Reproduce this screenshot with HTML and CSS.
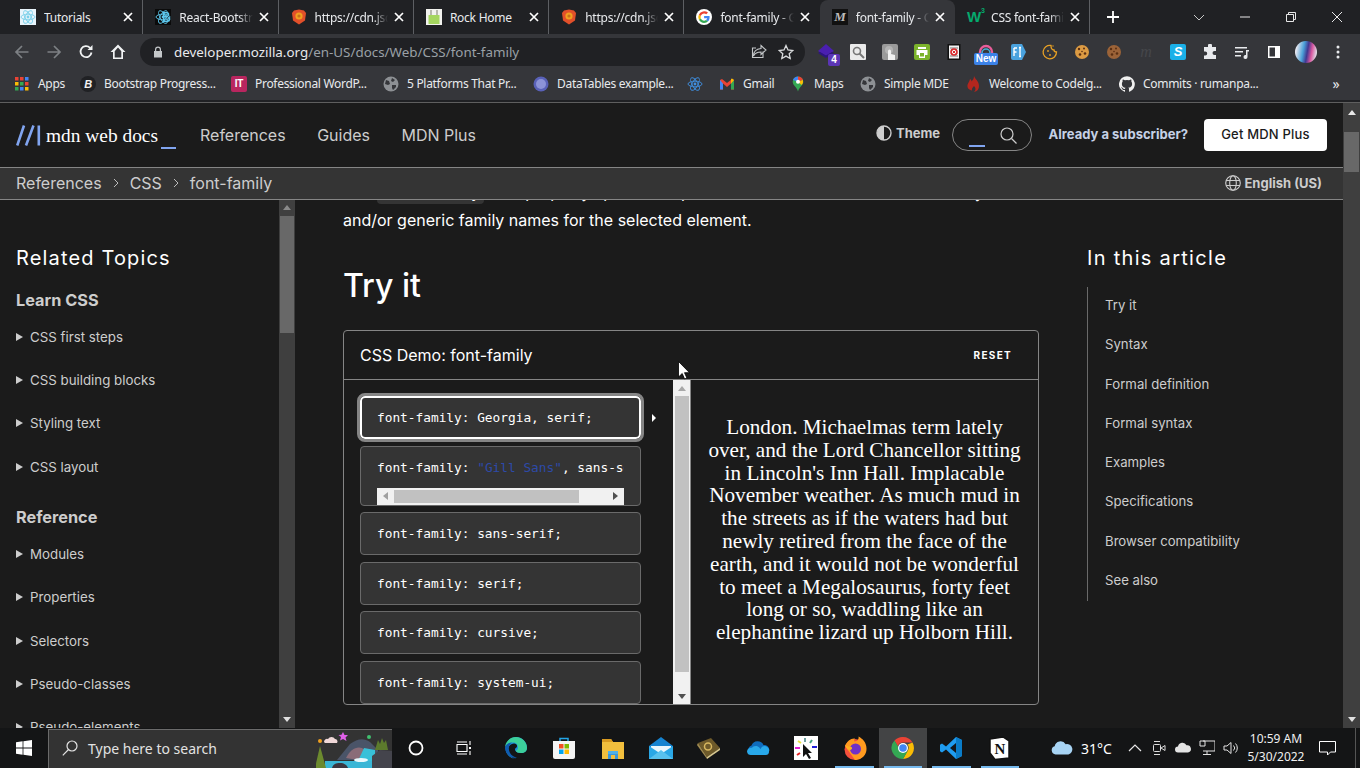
FILE: index.html
```html
<!DOCTYPE html>
<html lang="en">
<head>
<meta charset="utf-8">
<title>font-family - CSS | MDN</title>
<link rel="stylesheet" href="styles.css">
</head>
<body>
<svg class="sprite" aria-hidden="true">
  <symbol id="x" viewBox="0 0 10 10"><path d="M1 1l8 8M9 1L1 9" stroke="currentColor" stroke-width="1.7" fill="none"/></symbol>
  <symbol id="lion" viewBox="0 0 16 16"><path d="M3 1.500L8 .5l5 1 2 2.500-1 7.500L8 15.500 2 11.500 1 4z" fill="#e2502a"/><circle cx="8" cy="7" r="3.600" fill="#f0a020"/><circle cx="8" cy="7" r="1.600" fill="#c9701a"/></symbol>
  <symbol id="globe" viewBox="0 0 16 16"><circle cx="8" cy="8" r="7.500" fill="#8d9094"/><path d="M3 4l3 1 1 3-2 1-3-1zM9 2l3 2-2 2-2-1zM9 9l4 0 0 2-3 3-1-2z" fill="#35363a"/></symbol>
  <symbol id="caret" viewBox="0 0 8 9"><path d="M0 0l8 4.500L0 9z" fill="currentColor"/></symbol>
  <symbol id="atom" viewBox="0 0 16 16"><g fill="none" stroke="currentColor" stroke-width=".9"><ellipse cx="8" cy="8" rx="7" ry="2.800"/><ellipse cx="8" cy="8" rx="7" ry="2.800" transform="rotate(60 8 8)"/><ellipse cx="8" cy="8" rx="7" ry="2.800" transform="rotate(120 8 8)"/></g><circle cx="8" cy="8" r="1.400" fill="currentColor"/></symbol>
  <symbol id="cookie" viewBox="0 0 16 16"><circle cx="8" cy="8" r="7" fill="currentColor"/><g fill="#5a2f12"><circle cx="5" cy="5" r="1.200"/><circle cx="10" cy="4.500" r="1"/><circle cx="11" cy="9.500" r="1.300"/><circle cx="6" cy="10.500" r="1.300"/><circle cx="8" cy="7.500" r=".8"/></g></symbol>
</svg>

<div class="tabstrip">
  <div class="tab">
    <svg class="fav fav-react" viewBox="0 0 16 16"><use href="#atom"/></svg>
    <span class="tab-title">Tutorials</span>
    <svg class="tab-x" viewBox="0 0 10 10"><use href="#x"/></svg>
  </div>
  <div class="tab">
    <svg class="fav fav-rb" viewBox="0 0 16 16"><use href="#atom"/><path d="M8 3h4a2.300 2.300 0 0 1 1 4.400A2.500 2.500 0 0 1 12 13H8zM9.600 4.500v2.300h2.200a1.100 1.100 0 0 0 0-2.300zM9.600 8.200v3.300h2.400a1.600 1.600 0 0 0 0-3.300z" fill="#5dc8ee"/></svg>
    <span class="tab-title">React-Bootstrap</span>
    <svg class="tab-x" viewBox="0 0 10 10"><use href="#x"/></svg>
  </div>
  <div class="tab">
    <svg class="fav" viewBox="0 0 16 16"><use href="#lion"/></svg>
    <span class="tab-title">https://cdn.jsdelivr</span>
    <svg class="tab-x" viewBox="0 0 10 10"><use href="#x"/></svg>
  </div>
  <div class="tab">
    <svg class="fav" viewBox="0 0 16 16"><rect width="16" height="16" fill="#f2f2ee"/><rect x="2.500" y="6" width="11" height="9" fill="#a5d65f"/><path d="M5 1v5M11 1v5" stroke="#7d7d6d"/></svg>
    <span class="tab-title">Rock Home</span>
    <svg class="tab-x" viewBox="0 0 10 10"><use href="#x"/></svg>
  </div>
  <div class="tab">
    <svg class="fav" viewBox="0 0 16 16"><use href="#lion"/></svg>
    <span class="tab-title">https://cdn.jsdelivr</span>
    <svg class="tab-x" viewBox="0 0 10 10"><use href="#x"/></svg>
  </div>
  <div class="tab">
    <svg class="fav" viewBox="0 0 16 16"><circle cx="8" cy="8" r="8" fill="#fff"/><path d="M13.600 8.200c0-.5 0-.9-.1-1.300H8.100v2.400h3.100c-.2.800-.6 1.400-1.200 1.800l1.900 1.500c1.100-1 1.700-2.500 1.700-4.400z" fill="#4285f4"/><path d="M8.100 14c1.600 0 2.900-.5 3.800-1.400L10 11.100c-.5.400-1.200.6-1.900.6-1.500 0-2.800-1-3.300-2.400L2.900 10.800C3.900 12.800 5.900 14 8.100 14z" fill="#34a853"/><path d="M4.800 9.300a3.600 3.600 0 0 1 0-2.300L2.900 5.500a6 6 0 0 0 0 5.300z" fill="#fbbc05"/><path d="M8.100 4.400c.9 0 1.600.3 2.200.9l1.700-1.700A6 6 0 0 0 2.900 5.500L4.800 7c.5-1.500 1.800-2.600 3.300-2.600z" fill="#ea4335"/></svg>
    <span class="tab-title">font-family - Google</span>
    <svg class="tab-x" viewBox="0 0 10 10"><use href="#x"/></svg>
  </div>
  <div class="tab tab-active">
    <span class="fav fav-m">M</span>
    <span class="tab-title">font-family - CSS</span>
    <svg class="tab-x" viewBox="0 0 10 10"><use href="#x"/></svg>
  </div>
  <div class="tab tab-last">
    <span class="fav fav-w">W<sup class="fav-w3">3</sup></span>
    <span class="tab-title">CSS font-family</span>
    <svg class="tab-x" viewBox="0 0 10 10"><use href="#x"/></svg>
  </div>
  <svg class="tab-plus" viewBox="0 0 12 12"><path d="M6 0v12M0 6h12" stroke="#fff" stroke-width="1.800"/></svg>
  <div class="winctl">
    <svg class="win-ic" viewBox="0 0 12 12"><path d="M1 4l5 5 5-5" stroke="#c8c8c8" fill="none"/></svg>
    <svg class="win-ic" viewBox="0 0 12 12"><path d="M1 6h10" stroke="#e8e8e8"/></svg>
    <svg class="win-ic" viewBox="0 0 12 12"><path d="M1.500 3.500h7v7h-7zM3.500 3.500v-2h7v7h-2" stroke="#e8e8e8" fill="none"/></svg>
    <svg class="win-ic" viewBox="0 0 12 12"><path d="M1 1l10 10M11 1L1 11" stroke="#e8e8e8" fill="none"/></svg>
  </div>
</div>

<div class="toolbar">
  <div class="nav-btns">
    <svg class="tb-ic tb-dim" viewBox="0 0 16 16"><path d="M14.500 8H2M8 2L2 8l6 6" fill="none" stroke="currentColor" stroke-width="1.700"/></svg>
    <svg class="tb-ic tb-dim" viewBox="0 0 16 16"><path d="M1.500 8H14M8 2l6 6-6 6" fill="none" stroke="currentColor" stroke-width="1.700"/></svg>
    <svg class="tb-ic" viewBox="0 0 16 16"><path d="M13.500 8.500A5.500 5.500 0 1 1 12 3.800" fill="none" stroke="currentColor" stroke-width="1.800"/><path d="M14.500 1v5h-5z" fill="currentColor"/></svg>
    <svg class="tb-ic" viewBox="0 0 16 16"><path d="M8 .5L.5 8H3v7h10V8h2.500zM4.700 13.400V7.200L8 3.500l3.300 3.700v6.200z" fill="currentColor" fill-rule="evenodd"/></svg>
  </div>
  <div class="omnibox">
    <svg class="lock" viewBox="0 0 10 12"><path d="M2 5V3.500a3 3 0 0 1 6 0V5h1v6.500H1V5zM3.200 5h3.600V3.500a1.800 1.800 0 0 0-3.600 0z" fill="#c4c7c9" fill-rule="evenodd"/></svg>
    <span class="url"><span class="url-host">developer.mozilla.org</span>/en-US/docs/Web/CSS/font-family</span>
    <svg class="omni-ic" viewBox="0 0 16 16"><path d="M10 1.500l5 4.500-5 4.500V8C6.500 8 4 9 2.500 12c0-4 2.500-7 7.500-7.500zM12 7.500v6H1.500V4H5" fill="none" stroke="#c4c7c9" stroke-width="1.100"/></svg>
    <svg class="omni-ic" viewBox="0 0 16 16"><path d="M8 1.500l2 4.500 4.800.5-3.600 3.200 1 4.800L8 12.100l-4.200 2.400 1-4.800L1.200 6.500 6 6z" fill="none" stroke="#d8dadc" stroke-width="1.300"/></svg>
  </div>
  <div class="exts">
    <div class="ext"><svg class="ext-16" viewBox="0 0 16 16"><path d="M8 0l8 7-8 5-8-5z" fill="#4a1fb0"/><path d="M0 9l8 5 8-5-2-1-6 3.500L2 8z" fill="#2d1480"/></svg><span class="ext-badge ext-four">4</span></div>
    <div class="ext"><svg class="ext-16" viewBox="0 0 16 16"><rect width="16" height="16" rx="1" fill="#ebebeb"/><circle cx="7" cy="7" r="3.500" fill="none" stroke="#777" stroke-width="1.600"/><path d="M9.500 9.500L14 14" stroke="#777" stroke-width="2"/></svg></div>
    <div class="ext"><svg class="ext-16" viewBox="0 0 16 16"><rect width="16" height="16" rx="2" fill="#9a9a9a"/><circle cx="7" cy="6" r="4" fill="#b4b4b4"/><path d="M6 16V7a1.500 1.500 0 0 1 3 0v3l4 1v5z" fill="#f2f2f2"/></svg></div>
    <div class="ext"><svg class="ext-16" viewBox="0 0 16 16"><rect width="16" height="16" rx="2" fill="#7cb32c"/><path d="M4 3h8v2H4zM2.500 6h11v5H11v3H5v-3H2.500z" fill="#fff"/><rect x="6" y="9" width="4" height="3.500" fill="#7cb32c"/></svg></div>
    <div class="ext"><svg class="ext-16" viewBox="0 0 16 16"><rect x="1.500" width="13" height="16" fill="#111"/><rect x="3" y="1.500" width="10" height="13" fill="#f4f4f4"/><path d="M4 4h8M4 12h8" stroke="#777"/><circle cx="8" cy="8" r="3" fill="none" stroke="#d8282a" stroke-width="1.600"/><path d="M6.500 6.500l3 3M9.500 6.500l-3 3" stroke="#d8282a"/></svg></div>
    <div class="ext"><svg class="ext-16" viewBox="0 0 16 16"><path d="M2 13V8a6 6 0 0 1 12 0v5z" fill="none" stroke="#e85d9a" stroke-width="2.400"/><path d="M4 9a4 4 0 0 1 8 0" fill="none" stroke="#46b0d8" stroke-width="1.500"/><circle cx="8" cy="10" r="2" fill="#444"/></svg><span class="ext-badge ext-new">New</span></div>
    <div class="ext"><svg class="ext-16" viewBox="0 0 16 16"><path d="M1 2a2 2 0 0 1 2-2h9l4 8-4 8H3a2 2 0 0 1-2-2z" fill="#4aa3df"/><path d="M4 4h3M4 4v8M4 8h2.500M9 3.500h2M10 3.500v9M9 12.500h2" stroke="#fff" stroke-width="1.400" fill="none"/></svg></div>
    <div class="ext"><svg class="ext-16" viewBox="0 0 16 16"><path d="M9 1.500a6.700 6.700 0 1 0 5.500 6.500c-1.500 0-2.500-1-2.500-2-1.500 0-3-1.500-3-4.500z" fill="none" stroke="#e8a125" stroke-width="1.300"/><circle cx="6" cy="7" r=".9" fill="#e8a125"/><circle cx="8" cy="11" r=".9" fill="#e8a125"/><circle cx="11" cy="2" r=".7" fill="#e8a125"/></svg></div>
    <div class="ext"><svg class="ext-16 ck-gold" viewBox="0 0 16 16"><use href="#cookie"/></svg></div>
    <div class="ext"><svg class="ext-16 ck-brown" viewBox="0 0 16 16"><use href="#cookie"/></svg></div>
    <div class="ext"><span class="ext-m">m</span></div>
    <div class="ext"><span class="ext-s">S</span></div>
    <div class="ext"><svg class="ext-16" viewBox="0 0 16 16"><path d="M6 1.500a2 2 0 0 1 4 0V3h4v4h-1.500a2 2 0 0 0 0 4H14v4H2v-3.500h1.200a2 2 0 0 0 0-4H2V3h4z" fill="#e8eaed"/></svg></div>
    <div class="ext"><svg class="ext-16" viewBox="0 0 16 16"><path d="M1 3h12v1.500H1zM1 7h8v1.500H1zM1 11h6v1.500H1z" fill="#e8eaed"/><path d="M12 6h3v1.500h-1.500V13a2 2 0 1 1-1.500-1.900z" fill="#e8eaed"/></svg></div>
    <div class="ext"><svg class="ext-16" viewBox="0 0 16 16"><path d="M2 2h12v12H2zM3.500 3.500v9H9v-9z" fill="#fff" fill-rule="evenodd"/></svg></div>
    <div class="ext"><span class="avatar"></span></div>
    <div class="ext"><svg class="ext-16" viewBox="0 0 16 16"><circle cx="8" cy="3" r="1.500" fill="#e8eaed"/><circle cx="8" cy="8" r="1.500" fill="#e8eaed"/><circle cx="8" cy="13" r="1.500" fill="#e8eaed"/></svg></div>
  </div>
</div>

<div class="bookmarks">
  <div class="bm"><svg class="bm-ic" viewBox="0 0 16 16"><g fill="#ea4335"><rect x="1" y="1" width="3.500" height="3.500"/><rect x="6" y="1" width="3.500" height="3.500"/></g><rect x="11" y="1" width="3.500" height="3.500" fill="#4285f4"/><rect x="1" y="6" width="3.500" height="3.500" fill="#fbbc05"/><rect x="6" y="6" width="3.500" height="3.500" fill="#34a853"/><rect x="11" y="6" width="3.500" height="3.500" fill="#ea4335"/><rect x="1" y="11" width="3.500" height="3.500" fill="#34a853"/><rect x="6" y="11" width="3.500" height="3.500" fill="#4285f4"/><rect x="11" y="11" width="3.500" height="3.500" fill="#fbbc05"/></svg><span>Apps</span></div>
  <div class="bm"><span class="bm-ic bm-b">B</span><span>Bootstrap Progress...</span></div>
  <div class="bm"><span class="bm-ic bm-it">IT</span><span>Professional WordP...</span></div>
  <div class="bm"><svg class="bm-ic" viewBox="0 0 16 16"><use href="#globe"/></svg><span>5 Platforms That Pr...</span></div>
  <div class="bm"><svg class="bm-ic" viewBox="0 0 16 16"><circle cx="8" cy="8" r="7.500" fill="#5961b8"/><circle cx="8" cy="8" r="5" fill="#8c93d8"/></svg><span>DataTables example...</span></div>
  <div class="bm"><svg class="bm-ic bm-atom" viewBox="0 0 16 16"><use href="#atom"/></svg></div>
  <div class="bm"><svg class="bm-ic" viewBox="0 0 16 16"><path d="M1 13.500V4l2 -1 5 4 5-4 2 1v9.500h-3V7.500L8 11 4 7.500v6z" fill="#ea4335"/><path d="M1 4v9.500h3V7.500z" fill="#4285f4"/><path d="M15 4v9.500h-3V7.500z" fill="#34a853"/><path d="M12 7.500V3l1-.5 2 1.500z" fill="#fbbc05"/></svg><span>Gmail</span></div>
  <div class="bm"><svg class="bm-ic" viewBox="0 0 16 16"><path d="M8 0.500a5.300 5.300 0 0 1 5.300 5.300c0 3.700-4 5-5.300 9.700C6.700 10.800 2.700 9.500 2.700 5.800A5.300 5.300 0 0 1 8 .5z" fill="#34a853"/><path d="M3 4A5.300 5.300 0 0 1 8 .5L8 5.800z" fill="#4285f4"/><path d="M8 .5a5.300 5.300 0 0 1 5 3.500L8 5.800z" fill="#ea4335"/><path d="M13 4a5.300 5.300 0 0 1-1.500 5L8 5.800z" fill="#fbbc05"/><circle cx="8" cy="5.800" r="2" fill="#fff"/></svg><span>Maps</span></div>
  <div class="bm"><svg class="bm-ic" viewBox="0 0 16 16"><use href="#globe"/></svg><span>Simple MDE</span></div>
  <div class="bm"><svg class="bm-ic" viewBox="0 0 16 16"><path d="M9 0c1 3 5 5 5 10a6 6 0 0 1-5 6c2-2 2-4 0-6-1 1.500-2.500 2-2 4.500C4 14 2 12 2.500 9 3 6.500 4.500 6 5 3c1 .5 1.500 1.500 1.500 2.500C8 4 9 2.500 9 0z" fill="#b3261e"/></svg><span>Welcome to Codelg...</span></div>
  <div class="bm"><svg class="bm-ic" viewBox="0 0 16 16"><path d="M8 .2a8 8 0 0 0-2.500 15.600c.4.100.5-.2.5-.4v-1.400c-2.200.5-2.700-1-2.700-1-.4-.9-.9-1.200-.9-1.200-.7-.5.100-.5.100-.5.800.100 1.200.8 1.200.8.700 1.200 1.900.9 2.300.7.100-.5.300-.9.500-1.100-1.800-.2-3.600-.9-3.600-4 0-.9.300-1.600.8-2.100-.1-.2-.4-1 .1-2.100 0 0 .7-.2 2.200.8a7.600 7.600 0 0 1 4 0c1.500-1 2.200-.8 2.200-.8.400 1.100.2 1.900.1 2.100.5.600.8 1.300.8 2.100 0 3.100-1.900 3.700-3.700 3.900.3.300.6.700.6 1.500v2.200c0 .2.100.5.600.4A8 8 0 0 0 8 .2z" fill="#f0f0f0"/></svg><span>Commits · rumanpa...</span></div>
  <div class="bm-more">»</div>
</div>

<div class="page">
  <div class="mdn">
    <header class="mdn-head">
      <div class="logo">
        <svg class="logo-m" viewBox="0 0 25 21"><path d="M1.200 20.500L8 .5M10 20.500L17.500 .5M22.800 .5v20" stroke="#81a5f0" stroke-width="2.600" fill="none"/></svg>
        <span class="logo-text">mdn web docs</span><span class="logo-under"></span>
      </div>
      <nav class="main-nav"><span>References</span><span>Guides</span><span>MDN Plus</span></nav>
      <div class="head-right">
        <div class="theme"><svg class="theme-ic" viewBox="0 0 16 16"><circle cx="8" cy="8" r="7" fill="none" stroke="#cdcdcd" stroke-width="1.400"/><path d="M8 1a7 7 0 0 0 0 14z" fill="#cdcdcd"/></svg><span>Theme</span></div>
        <div class="search-pill"><span class="search-under"></span><svg class="search-ic" viewBox="0 0 17 17"><circle cx="7" cy="7" r="6" fill="none" stroke="#cdcdcd" stroke-width="1.200"/><path d="M11.500 11.500l5 5" stroke="#cdcdcd" stroke-width="1.200"/></svg></div>
        <span class="already">Already a subscriber?</span>
        <span class="get-plus">Get MDN Plus</span>
      </div>
    </header>
    <div class="crumbs">
      <span>References</span><svg class="crumb-sep" viewBox="0 0 6 10"><path d="M1 1l4 4-4 4" fill="none" stroke="#bdbdbd"/></svg>
      <span>CSS</span><svg class="crumb-sep" viewBox="0 0 6 10"><path d="M1 1l4 4-4 4" fill="none" stroke="#bdbdbd"/></svg>
      <span>font-family</span>
      <div class="lang"><svg class="lang-ic" viewBox="0 0 16 16"><g fill="none" stroke="#cdcdcd" stroke-width="1.100"><circle cx="8" cy="8" r="7.300"/><ellipse cx="8" cy="8" rx="3.300" ry="7.300"/><path d="M1 5.500h14M1 10.500h14"/></g></svg><span>English (US)</span></div>
    </div>
    <div class="mdn-body">
      <aside class="side">
        <div class="side-list">
          <h2 class="side-title side-title-l">Related Topics</h2>
          <h3 class="side-head">Learn CSS</h3>
          <div class="side-item"><svg class="side-caret" viewBox="0 0 8 9"><use href="#caret"/></svg>CSS first steps</div>
          <div class="side-item"><svg class="side-caret" viewBox="0 0 8 9"><use href="#caret"/></svg>CSS building blocks</div>
          <div class="side-item"><svg class="side-caret" viewBox="0 0 8 9"><use href="#caret"/></svg>Styling text</div>
          <div class="side-item"><svg class="side-caret" viewBox="0 0 8 9"><use href="#caret"/></svg>CSS layout</div>
          <h3 class="side-head side-head-2">Reference</h3>
          <div class="side-item"><svg class="side-caret" viewBox="0 0 8 9"><use href="#caret"/></svg>Modules</div>
          <div class="side-item"><svg class="side-caret" viewBox="0 0 8 9"><use href="#caret"/></svg>Properties</div>
          <div class="side-item"><svg class="side-caret" viewBox="0 0 8 9"><use href="#caret"/></svg>Selectors</div>
          <div class="side-item"><svg class="side-caret" viewBox="0 0 8 9"><use href="#caret"/></svg>Pseudo-classes</div>
          <div class="side-item"><svg class="side-caret" viewBox="0 0 8 9"><use href="#caret"/></svg>Pseudo-elements</div>
        </div>
        <div class="sb sb-side">
          <svg class="sb-arrow" viewBox="0 0 8 5"><path d="M0 5l4-5 4 5z" fill="#8a8a8a"/></svg>
          <div class="sb-thumb-side"></div>
          <svg class="sb-arrow sb-arrow-end" viewBox="0 0 8 5"><path d="M0 0l4 5 4-5z" fill="#e0e0e0"/></svg>
        </div>
      </aside>
      <main class="article">
        <p class="intro">The <code class="intro-code">font-family</code> CSS property specifies a prioritized list of one or more font family names and/or generic family names for the selected element.</p>
        <h2 class="try">Try it</h2>
        <section class="demo">
          <div class="demo-head"><span class="demo-title">CSS Demo: font-family</span><span class="demo-reset">RESET</span></div>
          <div class="demo-body">
            <div class="choices">
              <div class="choice-list">
                <div class="choice choice-on">font-family: Georgia, serif;</div>
                <div class="choice choice-scroll">
                  <div class="choice-clip">font-family: <span class="str">"Gill Sans"</span>, sans-serif;</div>
                  <div class="hbar">
                    <svg class="hbar-a" viewBox="0 0 5 8"><path d="M5 0L0 4l5 4z" fill="#a0a0a0"/></svg>
                    <div class="hbar-thumb"></div>
                    <svg class="hbar-a" viewBox="0 0 5 8"><path d="M0 0l5 4-5 4z" fill="#505050"/></svg>
                  </div>
                </div>
                <div class="choice">font-family: sans-serif;</div>
                <div class="choice">font-family: serif;</div>
                <div class="choice">font-family: cursive;</div>
                <div class="choice">font-family: system-ui;</div>
              </div>
              <svg class="choice-arrow" viewBox="0 0 4 8"><path d="M0 0l4 4-4 4z" fill="#fff"/></svg>
              <div class="vbar">
                <svg class="vbar-a" viewBox="0 0 8 5"><path d="M0 5l4-5 4 5z" fill="#a8a8a8"/></svg>
                <div class="vbar-thumb"></div>
                <svg class="vbar-a" viewBox="0 0 8 5"><path d="M0 0l4 5 4-5z" fill="#505050"/></svg>
              </div>
            </div>
            <div class="output">London. Michaelmas term lately<br>over, and the Lord Chancellor sitting<br>in Lincoln's Inn Hall. Implacable<br>November weather. As much mud in<br>the streets as if the waters had but<br>newly retired from the face of the<br>earth, and it would not be wonderful<br>to meet a Megalosaurus, forty feet<br>long or so, waddling like an<br>elephantine lizard up Holborn Hill.</div>
          </div>
        </section>
      </main>
      <aside class="toc">
        <h2 class="side-title">In this article</h2>
        <ul class="toc-list">
          <li>Try it</li><li>Syntax</li><li>Formal definition</li><li>Formal syntax</li><li>Examples</li><li>Specifications</li><li>Browser compatibility</li><li>See also</li>
        </ul>
      </aside>
    </div>
  </div>
  <div class="sb sb-page">
    <svg class="sb-arrow sb-arrow-top" viewBox="0 0 8 5"><path d="M0 5l4-5 4 5z" fill="#e8e8e8"/></svg>
    <div class="sb-thumb-page"></div>
    <svg class="sb-arrow sb-arrow-end" viewBox="0 0 8 5"><path d="M0 0l4 5 4-5z" fill="#e0e0e0"/></svg>
  </div>
</div>

<div class="taskbar">
  <div class="start"><svg class="start-ic" viewBox="0 0 16 16"><path d="M0 2.300L6.600 1.300V7.600H0zM7.400 1.200L16 0V7.600H7.400zM0 8.400H6.600V14.700L0 13.800zM7.400 8.400H16V16L7.400 14.800z" fill="#fff"/></svg></div>
  <div class="tsearch">
    <svg class="ts-ic" viewBox="0 0 16 16"><circle cx="10" cy="6" r="5" fill="none" stroke="#e4e4e4" stroke-width="1.200"/><path d="M6.500 9.500L.8 15.300" stroke="#e4e4e4" stroke-width="1.200"/></svg>
    <span class="ts-text">Type here to search</span>
    <svg class="ts-art" viewBox="0 0 76 38">
      <path d="M21 30L34 14c8-6 14-6 20-2l8 8v10z" fill="#4a5468"/>
      <path d="M30 28c4-8 10-12 16-10l8 6v8z" fill="#8a6c78"/>
      <path d="M9 38V31h67v7z" fill="#3ab6d6"/>
      <path d="M42 31l6-13 11 2v11z" fill="#38c0d8"/>
      <path d="M56 38V26l8-6 12 1v17z" fill="#44444c"/>
      <path d="M16 38c1-4 4-5 8-5s7 2 8 5z" fill="#3c3640"/>
      <path d="M4 16L-1 38H10z" fill="#6c8a2e"/>
      <path d="M59 20l3-10 2 4 2-6 2 5 2-3 2 10z" fill="#5c7a2c"/>
      <path d="M8 12a3 3 0 0 1 4-3 4 4 0 0 1 7 0 2.500 2.500 0 0 1 2 4H9z" fill="#f0d8d8"/>
      <path d="M27 2l1.500 3 3.500 0-2.500 2.500 1 3.500-3.500-2-3 1.500 1-3.500L22.500 5l3-.2z" fill="#e060e8"/>
      <circle cx="4" cy="11" r="2" fill="#f0a020"/><circle cx="53" cy="7" r="2" fill="#40c070"/>
      <ellipse cx="45" cy="30" rx="7" ry="2" fill="#e8f8fc"/>
    </svg>
  </div>
  <div class="tk-apps">
    <div class="tk tk-sys"><svg class="tk-ic-s" viewBox="0 0 16 16"><circle cx="8" cy="8" r="6.500" fill="none" stroke="#fff" stroke-width="1.800"/></svg></div>
    <div class="tk tk-sys tk-sys-end"><svg class="tk-ic-s" viewBox="0 0 16 16"><path d="M1 4.500h10v7H1zM1 2h10M1 14h10M14 1v4M14 11v4" fill="none" stroke="#fff" stroke-width="1.100"/><rect x="13" y="7" width="2" height="2" fill="#fff"/></svg></div>
    <div class="tk"><svg class="tk-ic" viewBox="0 0 24 24"><path d="M12 1a11 11 0 0 1 11 11c0 3-2.500 5-6 5-3 0-6-1.500-6-3.500 0-1.500 1.500-1.500 2-3 .3-1.500-1-3-3-3-5 0-8 6-5 11 1.500 2.500 5 4.500 8 4.500A11 11 0 0 1 12 1z" fill="#1b8ed8"/><path d="M1 12A11 11 0 0 1 12 1c6 0 11 5 11 11 0 3-2.500 5-6 5-3 0-5-1-5-2 0-1 2-1 2-3.500C14 8 11 6 8 6.500 4 7 1 9 1 12z" fill="#3ccf9a"/><path d="M1 12c0-3 3.500-5.500 7-5.500-3.500 2-4 7-2 10.500 1.500 2.500 4 4 7 4.900A11 11 0 0 1 1 12z" fill="#0f5cb0"/></svg></div>
    <div class="tk"><svg class="tk-ic" viewBox="0 0 24 24"><path d="M8 5V2.500h8V5" fill="none" stroke="#23a6e8" stroke-width="1.500"/><path d="M1 5h22v16a2 2 0 0 1-2 2H3a2 2 0 0 1-2-2z" fill="#f4f4f4"/><rect x="7" y="8" width="4.500" height="4.500" fill="#f25022"/><rect x="12.500" y="8" width="4.500" height="4.500" fill="#7fba00"/><rect x="7" y="13.500" width="4.500" height="4.500" fill="#00a4ef"/><rect x="12.500" y="13.500" width="4.500" height="4.500" fill="#ffb900"/></svg></div>
    <div class="tk"><svg class="tk-ic" viewBox="0 0 24 24"><path d="M1 3h9l2 3h11v17H1z" fill="#f2bf3d"/><path d="M1 3h9l2 3H1z" fill="#d99a20"/><path d="M7 23v-8h10v8h-3v-4h-4v4z" fill="#3d97d8"/><path d="M7 15h10v3H7z" fill="#4fb0e8"/></svg></div>
    <div class="tk"><svg class="tk-ic" viewBox="0 0 24 24"><path d="M12 1l12 9v13H0V10z" fill="#1583d0"/><path d="M2 10h20v4l-10 5-10-5z" fill="#e9f6fc"/><path d="M0 10l12 8 12-8v13H0z" fill="#2aa7e6"/><path d="M0 23l12-9 12 9z" fill="#58c1ee"/></svg></div>
    <div class="tk"><svg class="tk-ic" viewBox="0 0 24 24"><path d="M1 7l13-5 9 10-13 9z" fill="#6e5a2a"/><path d="M1 7l9 14v2L0 9z" fill="#a08a50"/><path d="M10 21l13-9v2l-13 9z" fill="#d8c890"/><circle cx="11" cy="10.500" r="3.500" fill="none" stroke="#d8b860" stroke-width="1.500"/></svg></div>
    <div class="tk"><svg class="tk-ic" viewBox="0 0 24 24"><path d="M6 19A5 5 0 0 1 5.500 9.500 6.500 6.500 0 0 1 17.500 9 5 5 0 0 1 19 19z" fill="#0f6cbd"/><path d="M1 15.500A4 4 0 0 1 6 11.800a5 5 0 0 1 8.500 1.500A4 4 0 0 1 23 15.500 3.500 3.500 0 0 1 19.500 19H5a4 4 0 0 1-4-3.500z" fill="#28a8ea"/></svg></div>
    <div class="tk"><svg class="tk-ic" viewBox="0 0 24 24"><rect width="24" height="24" fill="#fff"/><path d="M4 5l3 2" stroke="#e8e040" stroke-width="2"/><path d="M1 12h5" stroke="#e020d0" stroke-width="2"/><path d="M18 11h5" stroke="#2020d8" stroke-width="2"/><path d="M3 19l3-2" stroke="#e02020" stroke-width="2"/><path d="M11 2v4" stroke="#70a0a0" stroke-width="2"/><path d="M18 4l-2 3" stroke="#40a080" stroke-width="2"/><path d="M9 8v13l3-3 3 5 2-1-3-5h4z" fill="#111"/></svg></div>
    <div class="tk tk-run"><svg class="tk-ic" viewBox="0 0 24 24"><circle cx="12" cy="13.500" r="10.500" fill="#f5503c"/><path d="M2 10C4 5 8 2 12 2.500c-1 1-1 2-.5 3C15 5 16 3 15.500 0.500c4 2 8 6 8 12A11 11 0 0 1 12 24z" fill="#ff9a1f"/><circle cx="12.500" cy="13" r="5.500" fill="#7030c8"/><path d="M2 9c1.500 2 5 1 7 2.500.5 2-2 2.500-2 2.500-2 0-4-2-5-5z" fill="#ffb020"/></svg></div>
    <div class="tk tk-run tk-hot"><svg class="tk-ic" viewBox="0 0 24 24"><path d="M12 1a11 11 0 0 1 9.500 5.500H12a5.500 5.500 0 0 0-5.200 3.800L3.500 4.500A11 11 0 0 1 12 1z" fill="#ea4335"/><path d="M21.500 6.500A11 11 0 0 1 12 23l4.700-8.200A5.500 5.500 0 0 0 16.500 8.500z" fill="#fbbc05"/><path d="M3.500 4.500l4.800 8.200a5.500 5.500 0 0 0 8.400 2.100L12 23A11 11 0 0 1 3.500 4.500z" fill="#34a853"/><circle cx="12" cy="12" r="5" fill="#fff"/><circle cx="12" cy="12" r="3.800" fill="#4285f4"/></svg></div>
    <div class="tk tk-run"><svg class="tk-ic" viewBox="0 0 24 24"><path d="M17 1l6 3v16l-6 3L7 13.500l-4 3-2-1.200V8.700L3 7.500l4 3z" fill="#1f9cf0"/><path d="M17 7l-6 5 6 5z" fill="#14181c"/><path d="M17 1l6 3v16l-6 3z" fill="#0a7cc8"/></svg></div>
    <div class="tk tk-run"><svg class="tk-ic" viewBox="0 0 24 24"><path d="M2 3L15 1l6 4v17l-14 1.500L2 17z" fill="#fff" stroke="#111" stroke-width="1.500"/><text class="tk-notion" x="12" y="18" text-anchor="middle">N</text></svg></div>
  </div>
  <div class="tray">
    <svg class="tr-cloud" viewBox="0 0 24 16"><path d="M5 15a4.500 4.500 0 0 1-1-8.800A6.500 6.500 0 0 1 16 3.800a5.500 5.500 0 0 1 3 11.200z" fill="#a8d4f4"/></svg>
    <span class="tr-temp">31°C</span>
    <svg class="tr-ic tr-first" viewBox="0 0 16 16"><path d="M2 11l6-6 6 6" fill="none" stroke="#e8e8e8" stroke-width="1.200"/></svg>
    <svg class="tr-ic" viewBox="0 0 16 16"><path d="M3 1.500h6M3 14.500h6" stroke="#ddd"/><rect x="2.500" y="4.500" width="7" height="7" rx="1" fill="none" stroke="#ddd"/><path d="M10 8l4-2.500v5z" fill="none" stroke="#ddd"/></svg>
    <svg class="tr-ic" viewBox="0 0 16 16"><path d="M3 12.500a3 3 0 0 1 0-6 4.500 4.500 0 0 1 8.500-1.200 3.600 3.600 0 0 1 1.500 7.200z" fill="#e4e4e4"/></svg>
    <svg class="tr-ic" viewBox="0 0 16 16"><path d="M4 1h12v10H4M8 11v3M4 14.500h8M1 1h5v5H1z" fill="none" stroke="#e4e4e4"/></svg>
    <svg class="tr-ic" viewBox="0 0 16 16"><path d="M1 6h3l4-3.500v11L4 10H1zM10.500 5.500a3.500 3.500 0 0 1 0 5M12.500 3.500a6.500 6.500 0 0 1 0 9" fill="none" stroke="#e4e4e4"/></svg>
    <div class="clock"><span>10:59 AM</span><span>5/30/2022</span></div>
    <svg class="tr-note" viewBox="0 0 17 15"><path d="M.5.500h16v10.500h-5l-3 3v-3H.5z" fill="none" stroke="#fff"/></svg>
    <span class="tr-line"></span>
  </div>
</div>

<svg class="cursor" viewBox="0 0 12 19"><path d="M.5.500v15.500l3.700-3.500 2.400 5.500 2.300-1-2.400-5.300h5z" fill="#fff" stroke="#000" stroke-width=".8"/></svg>
</body>
</html>
```

FILE: styles.css
```css
* { box-sizing: border-box; }
html, body { margin: 0; padding: 0; height: 768px; overflow: hidden; background: #1b1b1b; }
body { position: relative; width: 1360px; display: flex; flex-direction: column; font-family: "Inter", "Liberation Sans", sans-serif; }
.sprite { position: absolute; width: 0; height: 0; }
h2, h3, p, ul { margin: 0; padding: 0; }

/* Browser chrome */
.tabstrip { height: 34px; flex: none; background: #202124; display: flex; align-items: center; padding-left: 8px; color: #fff; font: 12px "Noto Sans", "Open Sans", sans-serif; letter-spacing: -.25px; }
.tab { width: 135.300px; height: 34px; display: flex; align-items: center; padding: 0 9px 0 12px; position: relative; border-right: 1px solid #5d5f63; flex: none; }
.tab:nth-child(6) { border-right-color: transparent; }
.tab-active { background: #35363a; border-radius: 8px 8px 0 0; border-right-color: transparent; }
.tab-last { border-right-color: #5d5f63; }
.fav { width: 16px; height: 16px; flex: none; }
.fav-react { background: #e8f4fb; color: #78cfe9; }
.fav-rb { background: #0b0b0b; color: #5dc8ee; }
.fav-m { background: #111; color: #bbb; font: italic 700 13px/16px "Liberation Serif", serif; text-align: center; }
.fav-w { color: #04aa6d; font: 700 15px/16px "Liberation Sans", sans-serif; position: relative; }
.fav-w3 { position: absolute; left: 14px; top: -3px; font-size: 7px; line-height: 10px; color: #04aa6d; }
.tab-title { margin-left: 8px; flex: 1; min-width: 0; white-space: nowrap; overflow: hidden; color: #e8eaed; -webkit-mask-image: linear-gradient(90deg, #000 80%, transparent); mask-image: linear-gradient(90deg, #000 80%, transparent); }
.tab:first-child .tab-title, .tab:nth-child(4) .tab-title { -webkit-mask-image: none; mask-image: none; }
.tab-x { width: 10px; height: 10px; flex: none; color: #fff; margin-left: 6px; }
.tab-plus { width: 12px; height: 12px; margin-left: 17px; flex: none; }
.winctl { margin-left: auto; display: grid; grid-template-columns: repeat(4, 46px); justify-items: center; }
.win-ic { width: 12px; height: 12px; }
.toolbar { height: 36px; flex: none; background: #35363a; display: flex; align-items: center; }
.nav-btns { display: grid; grid-template-columns: repeat(4, 32px); justify-items: center; padding-left: 6px; width: 140px; }
.tb-ic { width: 16px; height: 16px; color: #f1f3f4; }
.tb-dim { color: #7d8084; }
.omnibox { width: 665px; height: 28px; background: #202124; border-radius: 14px; display: flex; align-items: center; padding-left: 13px; color: #9aa0a6; font: 14px/28px "Noto Sans", sans-serif; }
.lock { width: 10px; height: 12px; flex: none; }
.url { margin-left: 11px; flex: 1; white-space: nowrap; font-size: 13.400px; }
.url-host { color: #e8eaed; }
.omni-ic { width: 16px; height: 16px; margin-right: 11px; }
.exts { display: grid; grid-template-columns: repeat(17, 32px); margin-left: 5px; justify-items: center; align-items: center; }
.ext { position: relative; width: 32px; height: 28px; display: flex; align-items: center; justify-content: center; }
.ext-16 { width: 16px; height: 16px; }
.ext-badge { position: absolute; font: 700 10px/12px "Liberation Sans", sans-serif; color: #fff; border-radius: 2px; text-align: center; }
.ext-four { left: 18px; bottom: 0; width: 12px; height: 12px; background: #5b35b5; }
.ext-new { left: 4px; bottom: 1px; width: 24px; height: 12px; background: #3b82e8; }
.ck-gold { color: #dc9b43; }
.ck-brown { color: #9b6338; }
.ext-m { color: #46474b; font: italic 16px/16px "Liberation Serif", serif; }
.ext-s { width: 16px; height: 16px; background: #1ab0e8; border-radius: 2px; color: #fff; font: italic 700 13px/16px "Liberation Sans", sans-serif; text-align: center; }
.avatar { width: 22px; height: 22px; border-radius: 50%; background: linear-gradient(100deg, #e8e8f0 10%, #4aa0d8 38%, #403890 55%, #d858a0 72%, #e0e0e8 92%); }
.bookmarks { height: 32px; flex: none; background: #35363a; display: grid; grid-template-columns: 66px 151px 152px 150px 154px 32px 71px 70px 105px 154px 1fr 24px; padding: 0 12px 3px 14px; align-items: center; color: #e8eaed; font: 12px "Noto Sans", sans-serif; letter-spacing: -.3px; border-bottom: 2px solid #202124; }
.bm { display: flex; align-items: center; gap: 8px; white-space: nowrap; overflow: hidden; }
.bm-ic { width: 16px; height: 16px; flex: none; }
.bm-b { background: #202124; border-radius: 50%; text-align: center; font: italic 700 11px/16px "Liberation Sans", sans-serif; color: #f0f0f0; }
.bm-it { background: #b9265f; border-radius: 2px; text-align: center; font: 700 10px/16px "Liberation Sans", sans-serif; color: #fff; }
.bm-atom { color: #3f8fe0; }
.bm-more { font-size: 14px; color: #e8eaed; text-align: center; }

/* MDN page */
.page { flex: none; height: 626px; display: flex; border-top: 1px solid #5f5f5f; background: #1b1b1b; position: relative; }
.mdn { width: 1343px; flex: none; display: flex; flex-direction: column; height: 625px; }
.mdn-head { height: 65px; flex: none; display: flex; align-items: center; border-bottom: 1px solid #858585; padding: 0 16px; color: #cdcdcd; }
.logo { display: flex; align-items: center; width: 184px; flex: none; }
.logo-m { width: 25px; height: 21px; flex: none; }
.logo-text { margin-left: 5px; color: #fff; font: 400 19.400px/1 "Liberation Serif", serif; width: 115px; white-space: nowrap; padding-top: 1px; }
.logo-under { width: 15px; height: 2px; background: #81a5f0; align-self: flex-end; margin-bottom: -3px; }
.main-nav { display: flex; gap: 31.500px; font-size: 16px; }
.head-right { margin-left: auto; display: flex; align-items: center; font-size: 13px; font-weight: 700; }
.theme { display: flex; align-items: center; gap: 4px; margin-right: 12px; margin-bottom: 4px; }
.theme-ic { width: 16px; height: 16px; }
.search-pill { width: 80px; height: 32px; border: 1px solid #858585; border-radius: 16px; display: flex; align-items: center; padding-left: 16px; margin-right: 16.500px; }
.search-under { width: 16px; height: 2px; background: #81a5f0; align-self: flex-end; margin-bottom: 3px; }
.search-ic { width: 17px; height: 17px; margin-left: 15px; }
.already { margin-right: 16px; margin-bottom: 2px; color: #c5d1e6; }
.get-plus { width: 123px; height: 32px; background: #fff; color: #1b1b1b; border-radius: 4px; text-align: center; line-height: 31px; font-weight: 500; letter-spacing: .2px; }
.crumbs { height: 32px; flex: none; background: #343434; border-bottom: 1px solid #858585; display: flex; align-items: center; padding: 0 21px 2px 16px; font-size: 16px; color: #cdcdcd; }
.crumb-sep { width: 6px; height: 10px; margin: 0 11px; }
.lang { margin-left: auto; display: flex; align-items: center; gap: 3px; font-size: 13px; font-weight: 700; }
.lang-ic { width: 16px; height: 16px; }
.mdn-body { flex: 1; min-height: 0; display: grid; grid-template-columns: 295px 744px 304px; overflow: hidden; }
.side { display: flex; overflow: hidden; }
.side-list { width: 279px; flex: none; padding: 46px 0 0 16px; color: #cdcdcd; }
.side-title { font-size: 20px; line-height: 24px; font-weight: 400; letter-spacing: 1.300px; color: #fff; }
.side-title-l { letter-spacing: 1.150px; }
.side-head { font-size: 16.300px; font-weight: 700; line-height: 24px; margin-top: 18px; margin-bottom: 3px; color: #cdcdcd; }
.side-head-2 { margin-top: 17px; }
.side-item { height: 43.350px; display: flex; align-items: center; font-size: 13.300px; white-space: nowrap; }
.side-caret { width: 7px; height: 8px; color: #cdcdcd; margin-right: 7px; }
.sb { background: #3f3f3f; display: flex; flex-direction: column; align-items: center; flex: none; }
.sb-side { width: 16px; }
.sb-arrow { width: 8px; height: 5px; margin: 5px 0 6px; flex: none; }
.sb-arrow-end { margin-top: auto; }
.sb-thumb-side { width: 14px; height: 117px; background: #686868; }
.sb-page { width: 17px; height: 625px; }
.sb-arrow-top { margin: 7px 0 17px; }
.sb-thumb-page { width: 15px; height: 40px; background: #686868; }
.article { padding-left: 48px; padding-right: 48px; color: #fff; min-width: 0; }
.intro { width: 696px; margin-top: -22px; font-size: 16px; line-height: 28px; }
.intro-code { background: #343434; padding: 2px 4px; border-radius: 4px; font: 15px "DejaVu Sans Mono", monospace; }
.try { font-size: 32px; font-weight: 500; line-height: 40px; margin-top: 32px; }
.demo { margin-top: 24px; height: 375px; width: 696px; border: 1px solid #858585; border-radius: 4px; display: flex; flex-direction: column; overflow: hidden; }
.demo-head { height: 49px; flex: none; border-bottom: 1px solid #858585; display: flex; align-items: center; justify-content: space-between; padding: 0 26px 0 16px; }
.demo-title { font-size: 16px; }
.demo-reset { font-size: 10px; font-weight: 700; letter-spacing: 1.300px; color: #fff; }
.demo-body { flex: 1; min-height: 0; display: flex; }
.choices { width: 347px; flex: none; display: flex; overflow: hidden; border-right: 1px solid #858585; }
.choice-list { width: 297px; flex: none; padding: 16px 0 0 16px; display: flex; flex-direction: column; gap: 6.500px; }
.choice { width: 281px; height: 43px; flex: none; background: #343434; border: 1px solid #6a6a6a; border-radius: 4px; padding: 0 16px; font: 12.800px/41px "DejaVu Sans Mono", monospace; color: #fff; white-space: nowrap; }
.choice-on { border: 2px solid #fff; outline: 3px solid #858585; line-height: 39px; border-radius: 5px; padding-left: 15px; }
.choice-scroll { height: 60px; line-height: 42px; }
.choice-clip { width: 247px; overflow: hidden; height: 41px; }
.str { color: #2d4aa8; }
.hbar { width: 247px; height: 17px; background: #f1f1f1; display: flex; align-items: center; }
.hbar-a { width: 5px; height: 8px; margin: 0 6px; flex: none; }
.hbar-thumb { width: 185px; height: 13px; background: #c1c1c1; margin: 0 28px 0 0; flex: none; }
.choice-arrow { width: 4px; height: 8px; margin: 34px 0 0 11px; flex: none; }
.vbar { width: 17px; flex: none; background: #f1f1f1; margin-left: 17px; display: flex; flex-direction: column; align-items: center; }
.vbar-a { width: 8px; height: 5px; margin: 6px 0 5px; flex: none; }
.vbar-thumb { width: 14px; flex: 1; background: #c1c1c1; margin-bottom: 16px; }
.output { flex: 1; min-width: 0; padding-top: 36px; text-align: center; color: #fff; font: 21.200px/22.800px "Liberation Serif", serif; white-space: nowrap; }
.toc { padding: 46px 0 0 48px; color: #cdcdcd; }
.toc-list { list-style: none; margin-top: 17px; border-left: 1px solid #6a6a6a; padding-left: 17px; font-size: 13.200px; width: 200px; }
.toc-list li { height: 39.300px; line-height: 37px; white-space: nowrap; }

/* Windows taskbar */
.taskbar { height: 40px; flex: none; background: #141516; display: flex; align-items: stretch; color: #fff; font: 14px "Noto Sans", sans-serif; position: relative; }
.start { width: 48px; display: flex; align-items: center; justify-content: center; }
.start-ic { width: 16px; height: 16px; }
.tsearch { width: 344px; height: 39px; margin-top: 1px; background: #333; border: 1px solid #6b6b6b; border-bottom: 0; border-right: 0; display: flex; align-items: center; padding: 0 0 2px 13px; overflow: hidden; }
.ts-ic { width: 16px; height: 16px; flex: none; }
.ts-text { margin-left: 10px; color: #e2e2e2; font-size: 14px; }
.ts-art { width: 76px; height: 38px; margin-left: auto; margin-bottom: -2px; flex: none; }
.tk-apps { display: flex; width: 631px; flex: none; }
.tk { width: 48.400px; height: 40px; display: flex; align-items: center; justify-content: center; flex: none; position: relative; }
.tk-sys { width: 48px; }
.tk-sys-end { margin-right: 3.600px; }
.tk-ic { width: 24px; height: 24px; }
.tk-ic-s { width: 16px; height: 16px; }
.tk-run::after { content: ""; position: absolute; left: 5px; right: 5px; bottom: 0; height: 2px; background: #76b9ed; }
.tk-hot { background: #434445; }
.tk-notion { font: 700 15px "Liberation Serif", serif; fill: #111; }
.tray { flex: 1; display: flex; align-items: center; position: relative; padding-left: 28px; font-size: 13px; }
.tr-cloud { width: 22px; height: 16px; flex: none; }
.tr-temp { margin-left: 8px; font-size: 14px; width: 32px; }
.tr-ic { width: 16px; height: 16px; margin-left: 8px; flex: none; }
.tr-first { margin-left: 14px; }
.clock { width: 60px; margin-left: 7px; display: flex; flex-direction: column; align-items: center; font-size: 12px; line-height: 18px; color: #f0f0f0; white-space: nowrap; }
.tr-note { width: 17px; height: 15px; margin-left: 13px; }
.tr-line { width: 1px; height: 40px; background: #555; margin-left: 19px; }
.cursor { position: absolute; left: 678px; top: 361px; width: 12px; height: 19px; }
```
